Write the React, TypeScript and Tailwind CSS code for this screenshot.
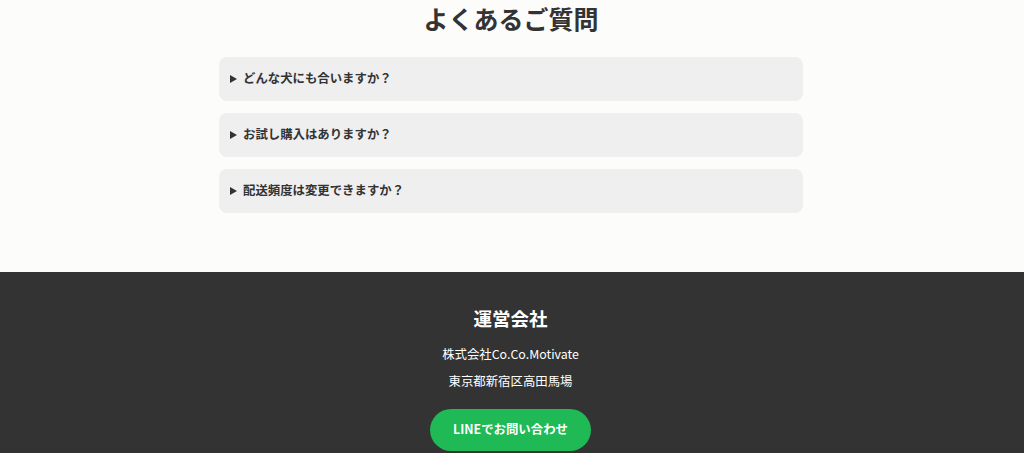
import React from "react";

const faqs = [
  "どんな犬にも合いますか？",
  "お試し購入はありますか？",
  "配送頻度は変更できますか？",
];

export default function App() {
  return (
    <div
      className="w-[1024px] h-[453px] overflow-hidden bg-[#fcfcfa]"
      style={{ fontFamily: '"Noto Sans CJK JP", "Noto Sans", sans-serif' }}
    >
      <section className="flex flex-col items-center pb-[59px] pr-[2px]">
        <h2 className="text-[25px] leading-[36px] font-bold text-[#333333] mb-[21px]">
          よくあるご質問
        </h2>
        <div className="w-[584px] flex flex-col gap-[12.5px]">
          {faqs.map((q) => (
            <div
              key={q}
              className="h-[43.5px] rounded-[8px] bg-[#efefef] flex items-center pl-[11px]"
            >
              <svg width="7" height="8" viewBox="0 0 7 8" className="mr-[6px]">
                <polygon points="0,0 7,4 0,8" fill="#333333" />
              </svg>
              <span className="text-[12.4px] font-bold text-[#333333]">
                {q}
              </span>
            </div>
          ))}
        </div>
      </section>
      <footer className="bg-[#333333] flex flex-col items-center pt-[33px] pb-[20px] pr-[3px] text-white">
        <h3 className="text-[18.5px] leading-[27px] font-bold">運営会社</h3>
        <p className="text-[12.4px] leading-[20px] mt-[12px]">株式会社Co.Co.Motivate</p>
        <p className="text-[12.4px] leading-[20px] mt-[7px]">東京都新宿区高田馬場</p>
        <button className="mt-[18px] w-[161px] h-[42px] rounded-full bg-[#1fb955] text-white text-[12.4px] font-bold">
          LINEでお問い合わせ
        </button>
      </footer>
    </div>
  );
}
